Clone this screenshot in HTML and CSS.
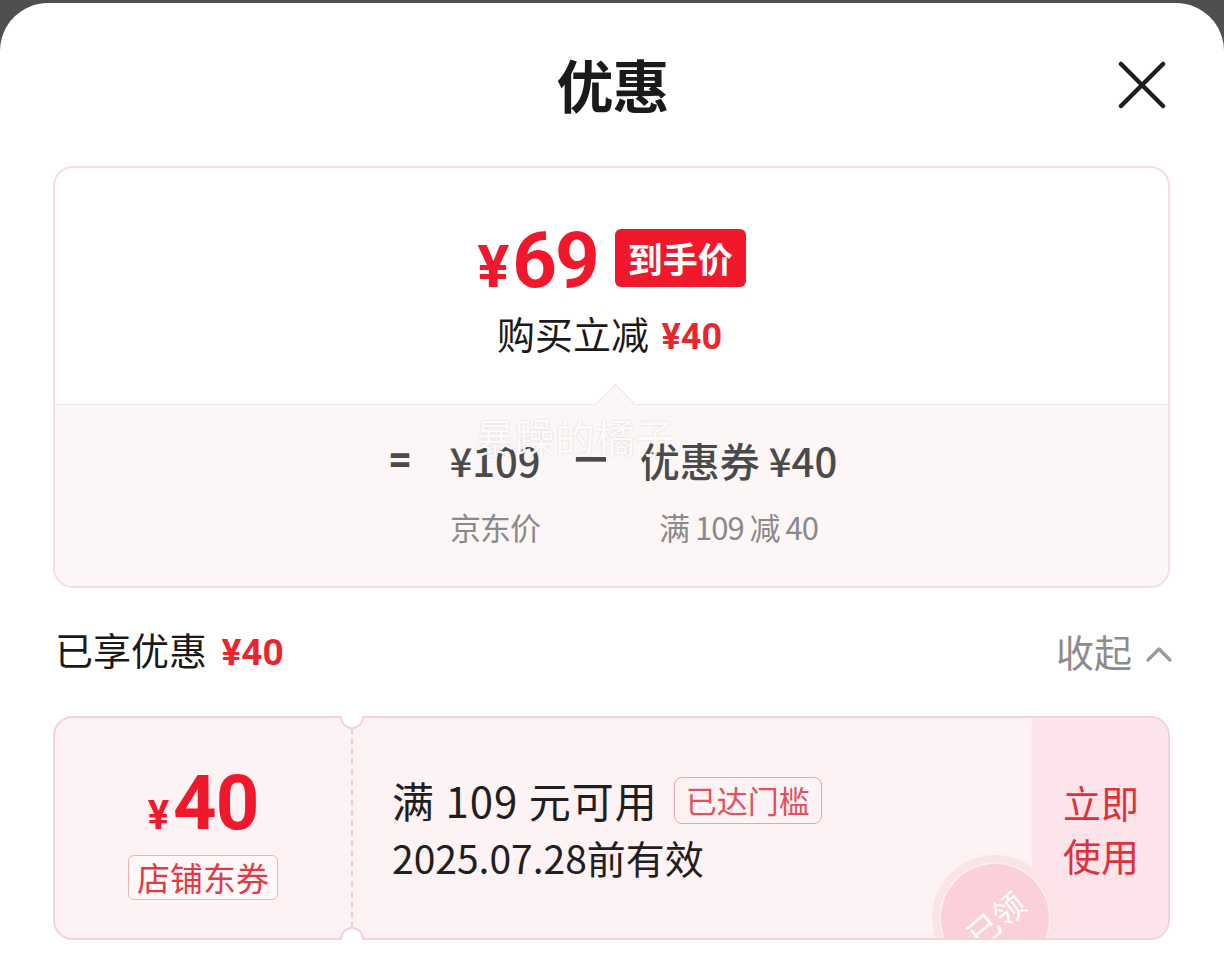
FILE: index.html
```html
<!DOCTYPE html>
<html lang="zh-CN">
<head>
<meta charset="utf-8">
<title>优惠</title>
<link rel="stylesheet" href="styles.css">
</head>
<body>
<div class="sheet">
  <header class="header">
    <span class="header-side"></span>
    <h1 class="title">优惠</h1>
    <button class="close" aria-label="关闭">
      <svg viewBox="0 0 48 48" width="48" height="48"><path d="M3 3L45 45M45 3L3 45" fill="none" stroke="#1f1f1f" stroke-width="4.5" stroke-linecap="round"/></svg>
    </button>
  </header>

  <section class="summary">
    <div class="summary-top">
      <div class="final">
        <span class="final-price"><span class="final-yen">¥</span><span class="final-num">69</span></span>
        <span class="final-badge">到手价</span>
      </div>
      <div class="instant">购买立减 <span class="instant-amt">¥40</span></div>
    </div>
    <div class="summary-bottom">
      <div class="formula">
        <span class="op">=</span>
        <div class="term term-price">
          <div class="term-main">¥109</div>
          <div class="term-sub">京东价</div>
        </div>
        <span class="op op-minus"><span class="minus-glyph">−</span></span>
        <div class="term term-coupon">
          <div class="term-main">优惠券 ¥40</div>
          <div class="term-sub">满 109 减 40</div>
        </div>
      </div>
      <div class="watermark">暴躁的橘子</div>
    </div>
  </section>

  <div class="enjoyed">
    <div class="enjoyed-left">已享优惠 <span class="enjoyed-amt">¥40</span></div>
    <div class="collapse">收起
      <svg viewBox="0 0 26 16" width="26" height="16"><path d="M2 14L13 3L24 14" fill="none" stroke="#9a9a9a" stroke-width="3.2" stroke-linecap="round" stroke-linejoin="round"/></svg>
    </div>
  </div>

  <div class="coupon">
    <span class="notch notch-top"></span>
    <span class="notch notch-bottom"></span>
    <div class="coupon-body">
      <div class="coupon-left">
        <div class="coupon-value"><span class="coupon-yen">¥</span><span class="coupon-num">40</span></div>
        <span class="coupon-type">店铺东券</span>
      </div>
      <div class="coupon-mid">
        <div class="coupon-cond">满 109 元可用<span class="coupon-reached">已达门槛</span></div>
        <div class="coupon-date">2025.07.28前有效</div>
      </div>
      <div class="coupon-action">
        <span>立即</span>
        <span>使用</span>
      </div>
      <div class="stamp"><span class="stamp-text">已领</span></div>
    </div>
  </div>
</div>
</body>
</html>
```

FILE: styles.css
```css
* { box-sizing: border-box; margin: 0; padding: 0; }

html, body {
  background: #4f4f4f;
}

body {
  font-family: "Noto Sans CJK SC", "Noto Sans", sans-serif;
  color: #1a1a1a;
  width: 1224px;
  height: 974px;
  overflow: hidden;
}

.sheet {
  margin-top: 3px;
  background: #fff;
  border-radius: 48px 48px 0 0;
  height: 971px;
  padding: 0 54px 0 53px;
}

/* header */
.header {
  height: 163px;
  display: grid;
  grid-template-columns: 1fr auto 1fr;
  align-items: center;
}

.title {
  font-size: 57px;
  font-weight: 700;
  line-height: 64px;
  color: #1a1a1a;
  letter-spacing: -1px;
  transform: translate(1px, -2px);
}

.close {
  justify-self: end;
  margin-right: 4px;
  width: 48px;
  height: 48px;
  border: none;
  background: none;
  display: flex;
}

/* summary card */
.summary {
  border: 2px solid #f6dde2;
  border-radius: 20px;
  overflow: hidden;
}

.summary-top {
  height: 236px;
  display: flex;
  flex-direction: column;
  align-items: center;
  padding-top: 61px;
}

.final {
  display: flex;
  align-items: center;
  height: 58px;
  gap: 17px;
}

.final-price {
  font-family: Roboto, "Liberation Sans", sans-serif;
  color: #f0182a;
  font-weight: 700;
  line-height: 58px;
  display: flex;
  align-items: baseline;
  transform: translateY(6px);
}

.final-yen {
  font-size: 60px;
  margin-right: 3px;
}

.final-num {
  font-size: 78px;
  letter-spacing: -2px;
}

.final-badge {
  background: #f2182c;
  color: #fff;
  font-size: 35px;
  font-weight: 700;
  height: 58px;
  line-height: 58px;
  padding: 0 13px;
  border-radius: 6px;
}

.instant {
  margin-top: 21px;
  font-size: 38px;
  line-height: 50px;
  color: #1a1a1a;
  transform: translateX(-2px);
}

.instant-amt {
  font-family: Roboto, "Liberation Sans", sans-serif;
  font-weight: 700;
  font-size: 36px;
  color: #e8262f;
  margin-left: 4px;
}

.summary-bottom {
  position: relative;
  height: 182px;
  background: #fdf6f7;
  border-top: 1px solid #f6e2e5;
}

.summary-bottom::before {
  content: "";
  position: absolute;
  top: -15px;
  left: 50%;
  width: 28px;
  height: 28px;
  margin-left: -11px;
  background: #fdf6f7;
  border-top: 1px solid #f6e2e5;
  border-left: 1px solid #f6e2e5;
  transform: rotate(45deg);
}

.formula {
  display: flex;
  justify-content: center;
  align-items: flex-start;
  padding-top: 30px;
  padding-left: 4px;
}

.op {
  font-family: Roboto, "Liberation Sans", sans-serif;
  font-weight: 700;
  font-size: 42px;
  line-height: 50px;
  color: #4a4a4a;
  width: 25px;
  text-align: center;
}

.op-minus {
  width: 26px;
  margin: 0 34px 0 35px;
}

.minus-glyph {
  display: inline-block;
  transform: scaleX(1.7);
}

.term {
  display: flex;
  flex-direction: column;
  align-items: center;
}

.term-price {
  margin-left: 35px;
  width: 95px;
}

.term-coupon {
  width: 202px;
}

.term-main {
  font-size: 40px;
  line-height: 50px;
  color: #4a4a4a;
  font-weight: 500;
  white-space: nowrap;
}

.term-sub {
  margin-top: 22px;
  font-size: 31px;
  line-height: 40px;
  color: #8a8a8a;
  white-space: nowrap;
  letter-spacing: -1px;
}

.watermark {
  position: absolute;
  top: 8px;
  left: 420px;
  font-size: 40px;
  line-height: 46px;
  color: rgba(255, 255, 255, 0.92);
  text-shadow: 0 0 2px rgba(120, 120, 120, 0.3);
  pointer-events: none;
}

/* enjoyed row */
.enjoyed {
  margin-top: 31px;
  height: 64px;
  display: flex;
  align-items: center;
  justify-content: space-between;
  padding: 0 0 0 2px;
}

.enjoyed-left {
  font-size: 38px;
  line-height: 64px;
  color: #1a1a1a;
}

.enjoyed-amt {
  font-family: Roboto, "Liberation Sans", sans-serif;
  font-weight: 700;
  font-size: 37px;
  color: #e8262f;
  margin-left: 6px;
}

.collapse {
  display: flex;
  align-items: center;
  gap: 14px;
  font-size: 38px;
  line-height: 64px;
  color: #8c8c8c;
  margin-right: -2px;
}

.collapse svg {
  margin-top: 6px;
}

/* coupon */
.coupon {
  position: relative;
  margin-top: 33px;
  height: 224px;
  border: 2px solid #f1d3d9;
  border-radius: 20px;
  background: #fdf2f4;
}

.notch {
  position: absolute;
  left: 285px;
  width: 24px;
  height: 13px;
  background: #fff;
  border: 2px solid #f1d3d9;
  z-index: 2;
}

.notch-top {
  top: -2px;
  border-top: none;
  border-radius: 0 0 12px 12px;
}

.notch-bottom {
  bottom: -2px;
  border-bottom: none;
  border-radius: 12px 12px 0 0;
}

.coupon-body {
  position: relative;
  height: 100%;
  border-radius: 18px;
  overflow: hidden;
  display: flex;
}

.coupon-left {
  width: 296px;
  display: flex;
  flex-direction: column;
  align-items: center;
  padding-top: 50px;
}

.coupon-value {
  font-family: Roboto, "Liberation Sans", sans-serif;
  font-weight: 700;
  color: #f0182a;
  line-height: 70px;
  height: 70px;
  display: flex;
  align-items: baseline;
}

.coupon-yen {
  font-size: 40px;
  margin-right: 4px;
}

.coupon-num {
  font-size: 76px;
  letter-spacing: -1px;
}

.coupon-type {
  margin-top: 17px;
  height: 45px;
  line-height: 42px;
  padding: 0 8px;
  font-size: 33px;
  color: #e23a45;
  border: 1.5px solid #eeb2b9;
  border-radius: 6px;
  background: #fff7f8;
}

.coupon-mid {
  flex: 1;
  border-left: 2px dashed #f2cbd2;
  padding: 55px 0 0 39px;
}

.coupon-cond {
  display: flex;
  align-items: center;
  font-size: 42px;
  line-height: 54px;
  color: #1f1f1f;
  white-space: nowrap;
  letter-spacing: 1px;
}

.coupon-reached {
  margin-left: 16px;
  height: 47px;
  line-height: 44px;
  padding: 0 11px;
  font-size: 31px;
  color: #e0525d;
  border: 1.5px solid #eaa3ab;
  border-radius: 8px;
  letter-spacing: 0;
}

.coupon-date {
  margin-top: 5px;
  font-size: 39px;
  line-height: 50px;
  color: #1f1f1f;
}

.coupon-action {
  width: 136px;
  background: #fde4ea;
  display: flex;
  flex-direction: column;
  align-items: center;
  justify-content: center;
  padding-left: 2px;
  font-size: 38px;
  line-height: 53px;
  color: #e0303a;
}

.stamp {
  position: absolute;
  left: 877px;
  top: 137px;
  width: 126px;
  height: 126px;
  border-radius: 50%;
  background: #fbd0d9;
  border: 7px solid #fce3e8;
  box-shadow: inset 0 0 0 2px #fdeff2;
  display: flex;
  align-items: center;
  justify-content: center;
}

.stamp-text {
  color: #fff;
  font-size: 32px;
  line-height: 40px;
  transform: rotate(-40deg);
}
```
